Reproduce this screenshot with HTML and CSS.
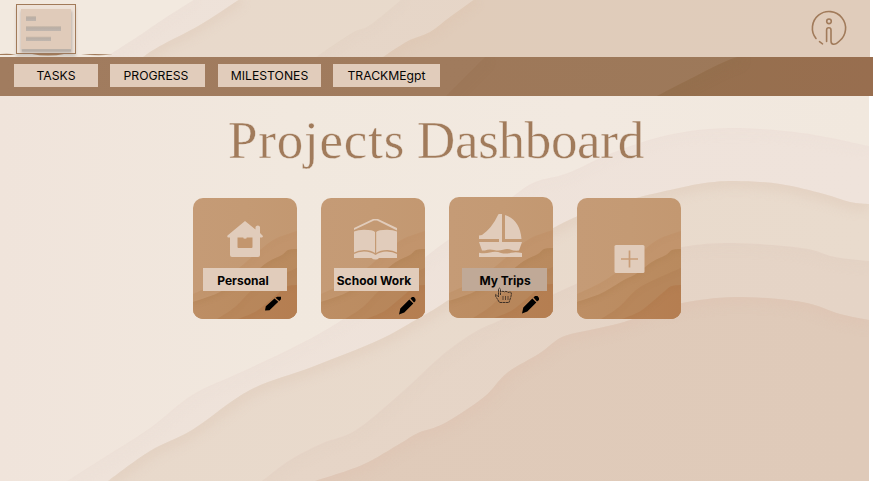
FILE: index.html
```html
<!DOCTYPE html>
<html lang="en">
<head>
<meta charset="utf-8">
<title>Projects Dashboard</title>
<link rel="stylesheet" href="styles.css">
</head>
<body>
<header class="top">
  <svg class="scene" width="870" height="57" viewBox="0 0 870 57" data-waves="header"></svg>
  <svg class="menu" width="120" height="57" viewBox="0 0 120 57">
    <defs>
      <filter id="soft" x="-20%" y="-20%" width="140%" height="150%"><feGaussianBlur stdDeviation="1.5"/></filter>
      <linearGradient id="bar" x2="0" y2="1"><stop stop-color="#d1bfae"/><stop offset=".35" stop-color="#b9aea5"/><stop offset="1" stop-color="#c0b6ae"/></linearGradient>
    </defs>
    <rect x="16" y="7" width="60" height="50" fill="#77706a" opacity=".25" filter="url(#soft)"/>
    <rect x="16.500" y="4.500" width="59" height="49" fill="#eee2d8" stroke="#a17a59"/>
    <rect x="21" y="11" width="51" height="42" fill="#77706a" opacity=".4" filter="url(#soft)"/>
    <rect x="21" y="9" width="50" height="40" fill="#e0cbba"/>
    <path d="M22 50.500h49" stroke="#b8aea6" stroke-width="2"/>
    <path d="M26 16h10v5H26z" fill="url(#bar)"/><path d="M26 26h35v5H26z" fill="url(#bar)"/><path d="M26 36.500h25v4.500H26z" fill="url(#bar)"/>
    <path d="M0 54q10-.6 16 .5Q8 55.300 0 55zM32 54h32q-7 1.500-16 1.500T32 54zM81 54.500q15-1.200 32 .3-17 .9-32-.3z" fill="#a17a59"/>
  </svg>
  <svg class="info" width="38" height="38" viewBox="0 0 38 38" fill="none" stroke="#a17b5b" stroke-width="1.600" stroke-linecap="round">
    <path d="M6 28.500A16.600 16.600 0 1 1 29.500 31Q26 34.500 23.500 34.300 21 34 21 31V20a2.200 2.200 0 0 0-4.400 0V31.500"/>
    <path d="M9.500 31.700l3 2.100"/><circle cx="19" cy="11.300" r="2.300"/>
  </svg>
</header>
<nav class="nav">
  <svg class="scene" width="873" height="39" viewBox="0 0 873 39" data-waves="nav"></svg>
  <a class="tab tasks">TASKS</a><a class="tab progress">PROGRESS</a><a class="tab milestones">MILESTONES</a><a class="tab gpt">TRACKMEgpt</a>
</nav>
<main class="main">
  <svg class="scene" width="869" height="385" viewBox="0 96 869 385" data-waves="main"></svg>
  <h1 class="title"><span class="first">Projects</span> <span class="second">Dashboard</span></h1>
  <section class="cards">
    <article class="card">
      <svg class="scene" width="104" height="121" data-waves="card"></svg>
      <svg class="icon" width="104" height="70" fill="#e1ccbb">
        <path d="M52 23L34.500 37.500q-.8 2 1 2H37V57q0 2 2 2h26q2 0 2-2V39.500h2q1.500-.7.500-2L67 35v-6q-.3-1.500-2.200-1.500T62.500 29v2.500z"/>
        <path d="M44.500 39.500h5.500l2 1 2-1h5.500V49q0 1-1 1h-13q-1 0-1-1z" fill="#c3966e"/><path d="M50.500 39.500h3v1h-3z" fill="#e1ccbb"/>
      </svg>
      <span class="label personal">Personal</span>
      <svg class="pen" width="104" height="28"><path d="M72 19.500l.8-4.300 8.700-7.700 3.800 3.300L76.500 19.200zM82.500 6.800l1.800-1H88v2.500L86.300 10z"/></svg>
    </article>
    <article class="card">
      <svg class="scene" width="104" height="121" data-waves="card"></svg>
      <svg class="icon" width="104" height="70" fill="#e1ccbb">
        <path d="M33 32V30L52 21h5L76 30v2.500L56 22.500h-3z"/>
        <path d="M33 33.500q4-1.700 10-1.700 9 0 11 2.200V55q-4-3-11-3-6 0-10 2.500zM55.200 34q2-2.200 11-2.200 6 0 9.800 1.700V54.500Q72 52 66 52q-7 0-10.800 3z"/>
        <path d="M33 56q4-2.500 10-2.500 7 0 11.500 3.500Q59 53.500 66 53.500q6 0 10 2.500v4H58q-1 1.500-3.500 1.500T50.500 60H33z"/>
      </svg>
      <span class="label school">School Work</span>
      <svg class="pen" width="104" height="28"><path d="M78 23.500l1.300-6 9-9 4 4-9 9zM89.500 7.500L91 6h2l1.500 2v2L93 11.500z"/></svg>
    </article>
    <article class="card active">
      <svg class="scene" width="104" height="121" data-waves="card"></svg>
      <svg class="icon" width="104" height="71" fill="#e1ccbb">
        <path d="M49 18q0-1 1.500-1H53v28h20l-3 8.500q-5 .5-8-.8-4-1.500-8 0t-9 .3-9 .5h-3L30 45h20v-3H30v-3.500l3-.5Q43 31 49 18zM56 18q15 5 16.500 24H56z"/>
        <path d="M30 55.800q6 1.200 11-.3 6-1.500 11 .5 5 1.300 10-.3 5-1.200 11 .3v4H30z"/>
      </svg>
      <span class="label trips">My Trips</span>
      <svg class="pen" width="104" height="27"><path d="M73 22.500l1.300-6 9-9 4 4-9 9zM84.500 6.500L86 5h2.500L90 7v2l-2 1.500z"/></svg>
      <svg class="cursor" width="18" height="17" viewBox="0 0 18 17" fill="none" stroke="#302721" stroke-width=".9">
        <path stroke-dasharray="2.500 .5" d="M5.500 8V2Q4 .2 3.500 2v8L1 7.500Q0 7 .5 9l4 6.500H14l1.500-4.500Q17.500 5 15 5l-2 .5q-2-2-3.500-.5Q7.500 3.500 6 5"/><path d="M8 9v4M10.500 9v4M13 9v4" stroke-width=".7"/>
      </svg>
    </article>
    <article class="card">
      <svg class="scene" width="104" height="121" data-waves="card"></svg>
      <svg class="icon" width="104" height="80"><rect x="37.500" y="47" width="30" height="28" rx="1.500" fill="#e1ccbb"/><path d="M44 61h17M52.500 52.500v17" stroke="#c99d78" stroke-width="1.700"/></svg>
    </article>
  </section>
</main>
<script src="waves.js"></script>
</body>
</html>
```
FILE: styles.css
```css
* { box-sizing: border-box; }
body { margin: 0; width: 873px; height: 481px; overflow: hidden; background: #fff; font-family: Inter, "Liberation Sans", sans-serif; color: #050403; }
svg { display: block; }
.top, .nav, .main { position: relative; isolation: isolate; }
.scene { position: absolute; inset: 0 auto auto 0; z-index: -1; }
.top { height: 57px; display: flex; justify-content: space-between; padding-right: 25px; }
.info { margin-top: 10px; }
.nav { height: 39px; display: flex; align-items: flex-start; gap: 12px; padding: 7px 0 0 14px; }
.tab { height: 23px; background: #e1ccbb; font-size: 12.200px; line-height: 23px; text-align: center; white-space: nowrap; }
.tasks { width: 84px; }
.progress { width: 95px; margin-right: 1px; padding-right: 3px; }
.milestones { width: 103px; }
.gpt { width: 107px; }
.main { height: 385px; overflow: hidden; }
.title { display: flex; margin: 0; padding: 14px 0 0 228px; height: 102px; font: 400 53px/60px "Liberation Serif", serif; color: #a17b5b; white-space: nowrap; -webkit-text-stroke: .4px #f0e7de; }
.first { width: 189px; letter-spacing: .8px; }
.second { letter-spacing: -.3px; }
.cards { display: flex; gap: 24px; padding-left: 193px; }
.card { position: relative; isolation: isolate; width: 104px; height: 121px; overflow: hidden; border-radius: 10px; }
.active { margin-top: -1px; }
.label { display: block; width: 85px; height: 23px; margin-left: 13px; background: #e1ccbb; font-size: 12px; font-weight: 700; line-height: 26px; text-align: center; white-space: nowrap; }
.personal { width: 84px; margin-left: 10px; padding-right: 4px; }
.school { padding-right: 5px; }
.trips { background: #c0a997; padding-left: 1px; }
.cursor { position: absolute; left: 46px; top: 90px; }
```
FILE: waves.js
```js
const scenes = {
  main: { w: 869, h: 481, base: ['#f0e4db', '#f1e8de', '#f2e9e0', '#f1e8de'], soft: 5, waves: [
    ['#eee2d9', '#efe3db', '#eadbd0', .1, '67,481 100,460 150,428 192,395 239,373 290,349 334,325 385,290 441,245 480,221 512,197 535,182 568,173 612,153 668,135 729,128 802,133 869,146'],
    ['#e8d9cb', '#e9dbcd', '#e1cdbd', .6, '108,481 150,451 192,430 250,390 312,367 379,340 412,322 441,305 485,275 525,245 569,220 605,207 640,197 679,188 705,183 735,181 780,184 824,194 850,202 869,204'],
    ['#e6d5c7', '#e5d4c6', '#dfcbbb', .12, '262,481 290,460 323,443 356,430 401,393 440,357 473,333 507,317 569,287 625,263 682,247 735,243 802,248 835,257 869,261'],
    ['#e0cbba', '#dfcab9', '#dfc4b3', .55, '315,481 362,465 401,443 418,433 445,423 484,397 507,373 540,353 562,337 590,330 624,322 652,311 682,303 735,297 802,302 840,314 869,320']] },
  header: { w: 870, h: 57, base: ['#f2e9df', '#f2e9df', '#f1e8de'], soft: 4, waves: [
    ['#eee2d9', '#ede0d7', '#eadbd0', .1, '106,57 140,35 165,18 195,-1'],
    ['#e8d9cb', '#e8dacb', '#e1cdbd', .6, '143,57 160,46 200,25 240,-1'],
    ['#e6d6c8', '#e5d4c6', '#dfcbbb', .12, '316,57 352,33 370,25 402,-1'],
    ['#e0ccba', '#e0ccbb', '#dec3ad', .3, '383,57 408,41 430,32 450,17 475,-1']] },
  nav: { w: 873, h: 39, base: ['#a17c5f', '#a07b5d', '#9f7a5b'], soft: 5, waves: [
    ['#9e7859', '#9c795a', '#997353', .1, '446,39 463,22 485,0'],
    ['#96704e', '#986e4f', '#93704d', .4, '657,39 690,22 722,6 740,-1']] },
  card: { w: 104, h: 121, base: ['#c59b76', '#c49a74', '#c39871'], soft: 2, waves: [
    ['#c2966e', '#c2946c', '#bb8b60', .1, '0,96 25,84 47,69 67,52 82,41 104,33'],
    ['#bd8e64', '#b98a5e', '#b18255', .45, '0,104 25,95 47,82 59,76 75,64 89,57 95,52 104,51'],
    ['#b9875b', '#b6865b', '#ae7d50', .12, '24,121 42,109 59,92 79,81 104,70'],
    ['#b68155', '#b57e51', '#ae784b', .25, '45,121 62,114 75,104 89,92 95,88 104,87']] }
};

// Smooth curve through every listed point.
function curve(text) {
  const p = text.split(' ').map(s => s.split(',').map(Number));
  let d = 'M' + p[0];
  for (let i = 0; i < p.length - 1; i++) {
    const a = p[i - 1] || p[i], b = p[i], c = p[i + 1], e = p[i + 2] || c;
    d += `C${b[0] + (c[0] - a[0]) / 6} ${b[1] + (c[1] - a[1]) / 6} ${c[0] - (e[0] - b[0]) / 6} ${c[1] - (e[1] - b[1]) / 6} ${c}`;
  }
  return d;
}

document.querySelectorAll('[data-waves]').forEach((svg, n) => {
  const s = scenes[svg.dataset.waves];
  const grad = (id, colors) => `<linearGradient id="${id}">${colors.map((c, i) => `<stop offset="${i / (colors.length - 1)}" stop-color="${c}"/>`).join('')}</linearGradient>`;
  let out = `<defs>${grad('base' + n, s.base)}<filter id="blur${n}" filterUnits="userSpaceOnUse" x="-20" y="-20" width="920" height="530"><feGaussianBlur stdDeviation="${s.soft}"/></filter></defs><rect width="${s.w}" height="${s.h}" fill="url(#base${n})"/>`;
  s.waves.forEach(([from, to, shade, strength, points], i) => {
    const line = curve(points), id = `${n}-${i}`;
    const area = `${line}L${s.w} ${points.split(',').pop()}V${s.h}H${points.split(',')[0]}Z`;
    out += `<defs>${grad('g' + id, [from, to])}<clipPath id="c${id}"><path d="${area}"/></clipPath></defs><path d="${area}" fill="url(#g${id})"/><g clip-path="url(#c${id})"><path d="${line}" fill="none" stroke="${shade}" stroke-width="${s.soft * 3}" opacity="${strength}" filter="url(#blur${n})"/></g>`;
  });
  svg.innerHTML = out;
});
```
